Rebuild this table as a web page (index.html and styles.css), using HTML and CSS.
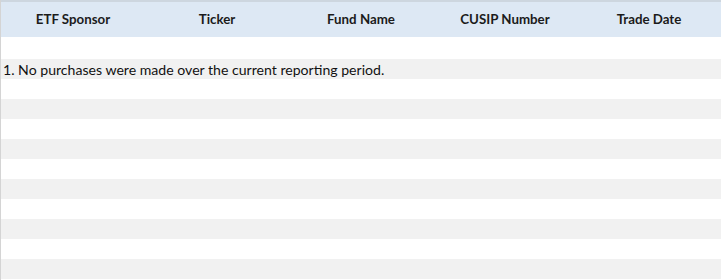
FILE: index.html
```html
<!DOCTYPE html>
<html>
<head>
<meta charset="utf-8">
<link rel="stylesheet" href="styles.css">
</head>
<body>
<div class="sheet">
  <div class="head">
    <div class="col">ETF Sponsor</div>
    <div class="col">Ticker</div>
    <div class="col">Fund Name</div>
    <div class="col">CUSIP Number</div>
    <div class="col">Trade Date</div>
  </div>
  <div class="row"></div>
  <div class="row alt"><span class="note">1. No purchases were made over the current reporting period.</span></div>
  <div class="row"></div>
  <div class="row alt"></div>
  <div class="row"></div>
  <div class="row alt"></div>
  <div class="row"></div>
  <div class="row alt"></div>
  <div class="row"></div>
  <div class="row alt"></div>
  <div class="row"></div>
  <div class="row alt"></div>
</div>
</body>
</html>
```
FILE: styles.css
```css
html, body {
  margin: 0;
  padding: 0;
  background: #ffffff;
}
.sheet {
  width: 721px;
  height: 280px;
  overflow: hidden;
  border-left: 1px solid #d4d4d4;
  box-sizing: border-box;
  font-family: Lato, "Open Sans", sans-serif;
}
.head {
  display: grid;
  grid-template-columns: repeat(5, 144px);
  height: 37px;
  box-sizing: border-box;
  border-top: 2px solid #cdd6df;
  background: #dde8f4;
  align-items: center;
  margin-bottom: 2px;
}
.col {
  text-align: center;
  font-weight: bold;
  font-size: 13.3px;
  color: #1b1b1b;
  padding-bottom: 2px;
}
.row {
  height: 20px;
  display: flex;
  align-items: center;
}
.alt {
  background: #f1f1f1;
}
.note {
  padding-left: 2px;
  font-size: 14.1px;
  color: #111111;
}
```
